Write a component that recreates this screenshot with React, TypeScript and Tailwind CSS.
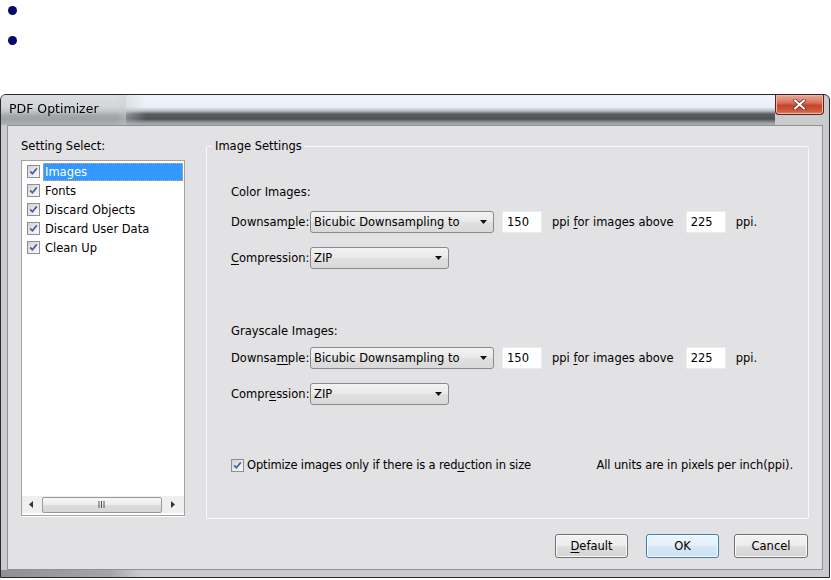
import React from 'react';

const FONT = "font-['DejaVu_Sans',sans-serif]";

function CheckBox() {
  return (
    <span className="flex h-[13px] w-[13px] shrink-0 items-center justify-center border border-[#8e8f8f] bg-white">
      <span className="flex h-[11px] w-[11px] items-center justify-center bg-[linear-gradient(135deg,#cfd2d6,#eef0f2_70%,#f8f8f8)]">
        <svg width="9" height="9" viewBox="0 0 9 9">
          <path d="M1.2 4.4 L3.4 6.8 L7.8 1.4" fill="none" stroke="#4b5f96" strokeWidth="1.7" />
        </svg>
      </span>
    </span>
  );
}

function Arrow() {
  return (
    <svg width="7" height="4" viewBox="0 0 7 4">
      <path d="M0 0 H7 L3.5 4 Z" fill="#111" />
    </svg>
  );
}

function Combo({ className, children }: { className: string; children: React.ReactNode }) {
  return (
    <div
      className={`flex h-[22px] items-center justify-between rounded-[3px] border border-[#8a8a8a] bg-[linear-gradient(#f3f3f3,#e9e9e9_50%,#e0e0e0_51%,#d9d9d9)] pl-[3px] pr-[6px] ${className}`}
    >
      <span>{children}</span>
      <Arrow />
    </div>
  );
}

function NumBox({ value, className }: { value: string; className: string }) {
  return (
    <div className={`flex h-[22px] w-[40px] items-center border border-[#ececec] bg-white pl-[4px] ${className}`}>
      {value}
    </div>
  );
}

function DownRow({ label, className }: { label: React.ReactNode; className: string }) {
  return (
    <div className={`flex h-[22px] items-center ${className}`}>
      <span className="w-[79px]">{label}</span>
      <Combo className="w-[184px]">Bicubic Downsampling to</Combo>
      <NumBox value="150" className="ml-[8px]" />
      <span className="ml-[10px]">
        ppi <u className="underline-offset-2">f</u>or images above
      </span>
      <NumBox value="225" className="ml-[12px]" />
      <span className="ml-[10px]">ppi.</span>
    </div>
  );
}

function CompRow({ label, className }: { label: React.ReactNode; className: string }) {
  return (
    <div className={`flex h-[22px] items-center ${className}`}>
      <span className="w-[79px]">{label}</span>
      <Combo className="w-[139px]">ZIP</Combo>
    </div>
  );
}

function WinButton({ children, primary, wide }: { children: React.ReactNode; primary?: boolean; wide?: boolean }) {
  const size = wide ? 'w-[74px]' : 'w-[73px]';
  return (
    <button
      className={
        primary
          ? `flex h-[24px] ${size} items-center justify-center rounded-[3px] border border-[#3c7fb1] bg-[linear-gradient(#eef6fc,#e3eff9_50%,#d6e8f5_51%,#cfe2f1)] shadow-[inset_0_0_0_1px_#f4faff]`
          : `flex h-[24px] ${size} items-center justify-center rounded-[3px] border border-[#707070] bg-[linear-gradient(#f3f3f3,#ececec_50%,#dedede_51%,#d3d3d3)] shadow-[inset_0_0_0_1px_#fbfbfb]`
      }
    >
      {children}
    </button>
  );
}

const items = ['Images', 'Fonts', 'Discard Objects', 'Discard User Data', 'Clean Up'];

export default function App() {
  return (
    <div className={`h-[580px] w-[831px] overflow-hidden bg-white text-[11.5px] leading-[14px] text-black ${FONT}`}>
      {/* bullets */}
      <div className="flex h-[94px] flex-col gap-[21px] pl-[8px] pt-[6px]">
        <span className="h-[9px] w-[9px] rounded-full bg-[#07076b]" />
        <span className="h-[9px] w-[9px] rounded-full bg-[#07076b]" />
      </div>

      {/* window */}
      <div className="flex h-[484px] w-[830px] flex-col overflow-hidden rounded-t-[6px] border border-[#2a2a2a] bg-[#c9cbce]">
        {/* title bar */}
        <div className="flex h-[30px] shrink-0 items-start">
          <div className="relative z-10 mr-[-20px] flex h-full w-[145px] shrink-0 items-center bg-[linear-gradient(#dcdee1,#d3d5d8_12px,#c4c7ca_16px,#a3a6a9_21px,#9fa2a6_25px,#b0b2b5_30px)] pb-[2px] pl-[8px] text-[12.5px] [mask-image:linear-gradient(to_right,black_115px,transparent)]">
            PDF Optimizer
          </div>
          <div className="h-full flex-1 bg-[linear-gradient(#eef5fb,#e9f1f8_12px,#b9bdc2_16px,#5a5e63_19px,#4d5156_24px,#76797d_26px,#9c9ea0_28px,#adafb1_30px)]" />
          <div className="mr-[5px] flex h-[20px] w-[49px] shrink-0 items-center justify-center rounded-b-[4px] border border-t-0 border-[#5b2418] bg-[linear-gradient(#eaa995,#d9735d_40%,#c5452b_55%,#cf5b3e_85%,#e08a6c)] shadow-[inset_0_0_0_1px_#f2b3a1]">
            <svg width="13" height="11" viewBox="0 0 13 11">
              <path d="M2 1.5 L11 9.5 M11 1.5 L2 9.5" stroke="#5a2a20" strokeWidth="3.6" strokeLinecap="round" />
              <path d="M2 1.5 L11 9.5 M11 1.5 L2 9.5" stroke="#ffffff" strokeWidth="2.2" strokeLinecap="round" />
            </svg>
          </div>
        </div>

        {/* client */}
        <div className="mx-[6px] flex h-[445px] shrink-0 flex-col border border-[#8f9194] bg-[#e2e1e3] px-[13px] pt-[13px]">
          <div className="flex gap-[21px]">
            {/* left column */}
            <div className="flex w-[164px] shrink-0 flex-col">
              <div className="mb-[7px] h-[14px]">Setting Select:</div>
              <div className="flex h-[356px] flex-col border border-[#a3a3a3] bg-white pt-[1px] shadow-[0_1px_0_#ffffff]">
                <div className="flex-1">
                  {items.map((it, i) => (
                    <div key={it} className="flex h-[19px] items-center pl-[5px]">
                      <CheckBox />
                      <span
                        className={
                          i === 0
                            ? 'ml-[3px] mr-[1px] flex h-[18px] flex-1 items-center bg-[#3399ff] pl-[2px] text-white outline-1 outline-dotted outline-offset-[-1px] outline-[#e0a86a]'
                            : 'ml-[3px] flex h-[18px] flex-1 items-center pl-[2px]'
                        }
                      >
                        {it}
                      </span>
                    </div>
                  ))}
                </div>
                {/* horizontal scrollbar */}
                <div className="mb-[2px] flex h-[17px] items-center bg-[#efefef]">
                  <div className="flex w-[18px] items-center justify-center">
                    <svg width="4" height="7" viewBox="0 0 4 7">
                      <path d="M4 0 V7 L0 3.5 Z" fill="#333" />
                    </svg>
                  </div>
                  <div className="ml-[2px] flex h-[16px] w-[120px] items-center justify-center rounded-[2px] border border-[#9a9a9a] bg-[linear-gradient(#f6f6f6,#ececec_50%,#dcdcdc_51%,#d6d6d6)]">
                    <svg width="9" height="7" viewBox="0 0 9 7">
                      <path d="M1 0 V7 M3.5 0 V7 M6 0 V7" stroke="#555" strokeWidth="1" />
                    </svg>
                  </div>
                  <div className="flex flex-1 items-center justify-center">
                    <svg width="4" height="7" viewBox="0 0 4 7">
                      <path d="M0 0 V7 L4 3.5 Z" fill="#333" />
                    </svg>
                  </div>
                </div>
              </div>
            </div>

            {/* group box */}
            <div className="relative mt-[7px] flex h-[373px] flex-1 flex-col rounded-[2px] border border-[#f8f8f8] pl-[24px] pr-[15px] pt-[38px]">
              <span className="absolute left-[6px] top-[-8px] bg-[#e2e1e3] px-[2px]">Image Settings</span>
              <div className="h-[14px]">Color Images:</div>
              <DownRow
                className="mt-[12px]"
                label={
                  <>
                    Downsam<u className="underline-offset-2">p</u>le:
                  </>
                }
              />
              <CompRow
                className="mt-[14px]"
                label={
                  <>
                    <u className="underline-offset-2">C</u>ompression:
                  </>
                }
              />
              <div className="mt-[55px] h-[14px]">Grayscale Images:</div>
              <DownRow
                className="mt-[9px]"
                label={
                  <>
                    Downsa<u className="underline-offset-2">m</u>ple:
                  </>
                }
              />
              <CompRow
                className="mt-[14px]"
                label={
                  <>
                    Compr<u className="underline-offset-2">e</u>ssion:
                  </>
                }
              />
              <div className="mt-[53px] flex h-[14px] items-center justify-between">
                <div className="flex items-center">
                  <CheckBox />
                  <span className="ml-[3px] tracking-[-0.15px]">
                    Optimize images only if there is a red<u className="underline-offset-2">u</u>ction in size
                  </span>
                </div>
                <span className="tracking-[-0.1px]">All units are in pixels per inch(ppi).</span>
              </div>
            </div>
          </div>

          {/* buttons */}
          <div className="mr-[1px] mt-[15px] flex justify-end">
            <WinButton>
              <u className="underline-offset-2">D</u>efault
            </WinButton>
            <div className="ml-[18px]">
              <WinButton primary>OK</WinButton>
            </div>
            <div className="ml-[15px]">
              <WinButton wide>Cancel</WinButton>
            </div>
          </div>
        </div>

        {/* bottom frame */}
        <div className="flex-1 bg-[linear-gradient(to_right,#8e9094,#a4a6a9_110px,#c9cbce_140px)]" />
      </div>
    </div>
  );
}
